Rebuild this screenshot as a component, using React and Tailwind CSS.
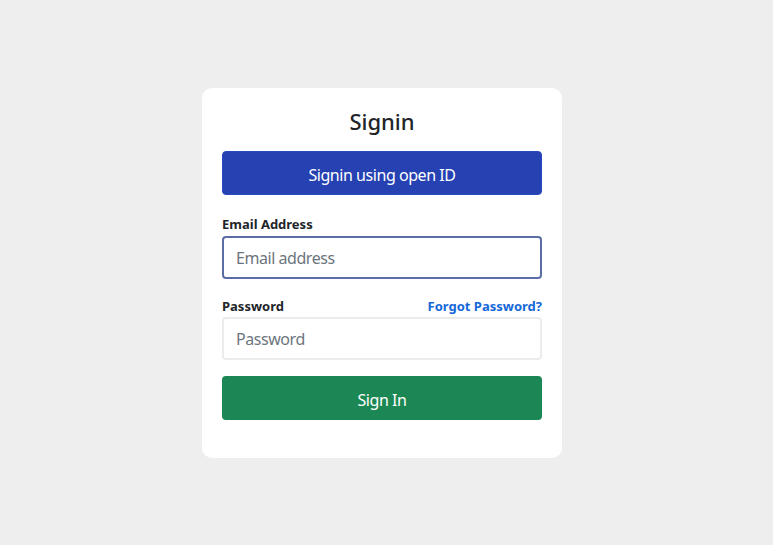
import React from 'react';

function App() {
  return (
    <div className="min-h-screen w-full bg-[#eeeeee] flex justify-center pr-[9px]" style={{ fontFamily: '"Noto Sans", "Open Sans", sans-serif' }}>
      <div className="mt-[88px] h-[370px] w-[360px] bg-white rounded-[10px] px-5 pt-[18px]">
        <h1 className="text-center text-[22px] leading-[30px] font-medium text-[#212529]">Signin</h1>

        <button
          type="button"
          className="mt-[15px] w-full h-[44px] pt-[3px] bg-[#2541b2] text-white text-[16px] tracking-[-0.45px] rounded-[4px] border border-[#2a48c0]"
        >
          Signin using open ID
        </button>

        <form className="mt-[19px]" onSubmit={(e) => e.preventDefault()}>
          <label className="block text-[13px] leading-[20px] font-bold text-[#212529] mb-[2px]">Email Address</label>
          <input
            type="email"
            placeholder="Email address"
            className="block w-full h-[43px] px-[12px] text-[16px] tracking-[-0.45px] border-2 border-[#5a6ea6] rounded-[4px] outline-none placeholder:text-[#6c757d]"
          />

          <div className="mt-[17px] mb-px flex items-center justify-between">
            <label className="text-[13px] leading-[20px] font-bold text-[#212529]">Password</label>
            <a href="#" className="text-[13px] leading-[20px] font-bold text-[#1468d8]">Forgot Password?</a>
          </div>
          <input
            type="password"
            placeholder="Password"
            className="block w-full h-[43px] px-[12px] text-[16px] tracking-[-0.45px] border-2 border-[#ececec] rounded-[4px] outline-none placeholder:text-[#6c757d]"
          />

          <button
            type="submit"
            className="mt-[16px] w-full h-[44px] pt-[3px] bg-[#1b8754] text-white text-[16px] tracking-[-0.45px] rounded-[4px]"
          >
            Sign In
          </button>
        </form>
      </div>
    </div>
  );
}

export default App;
